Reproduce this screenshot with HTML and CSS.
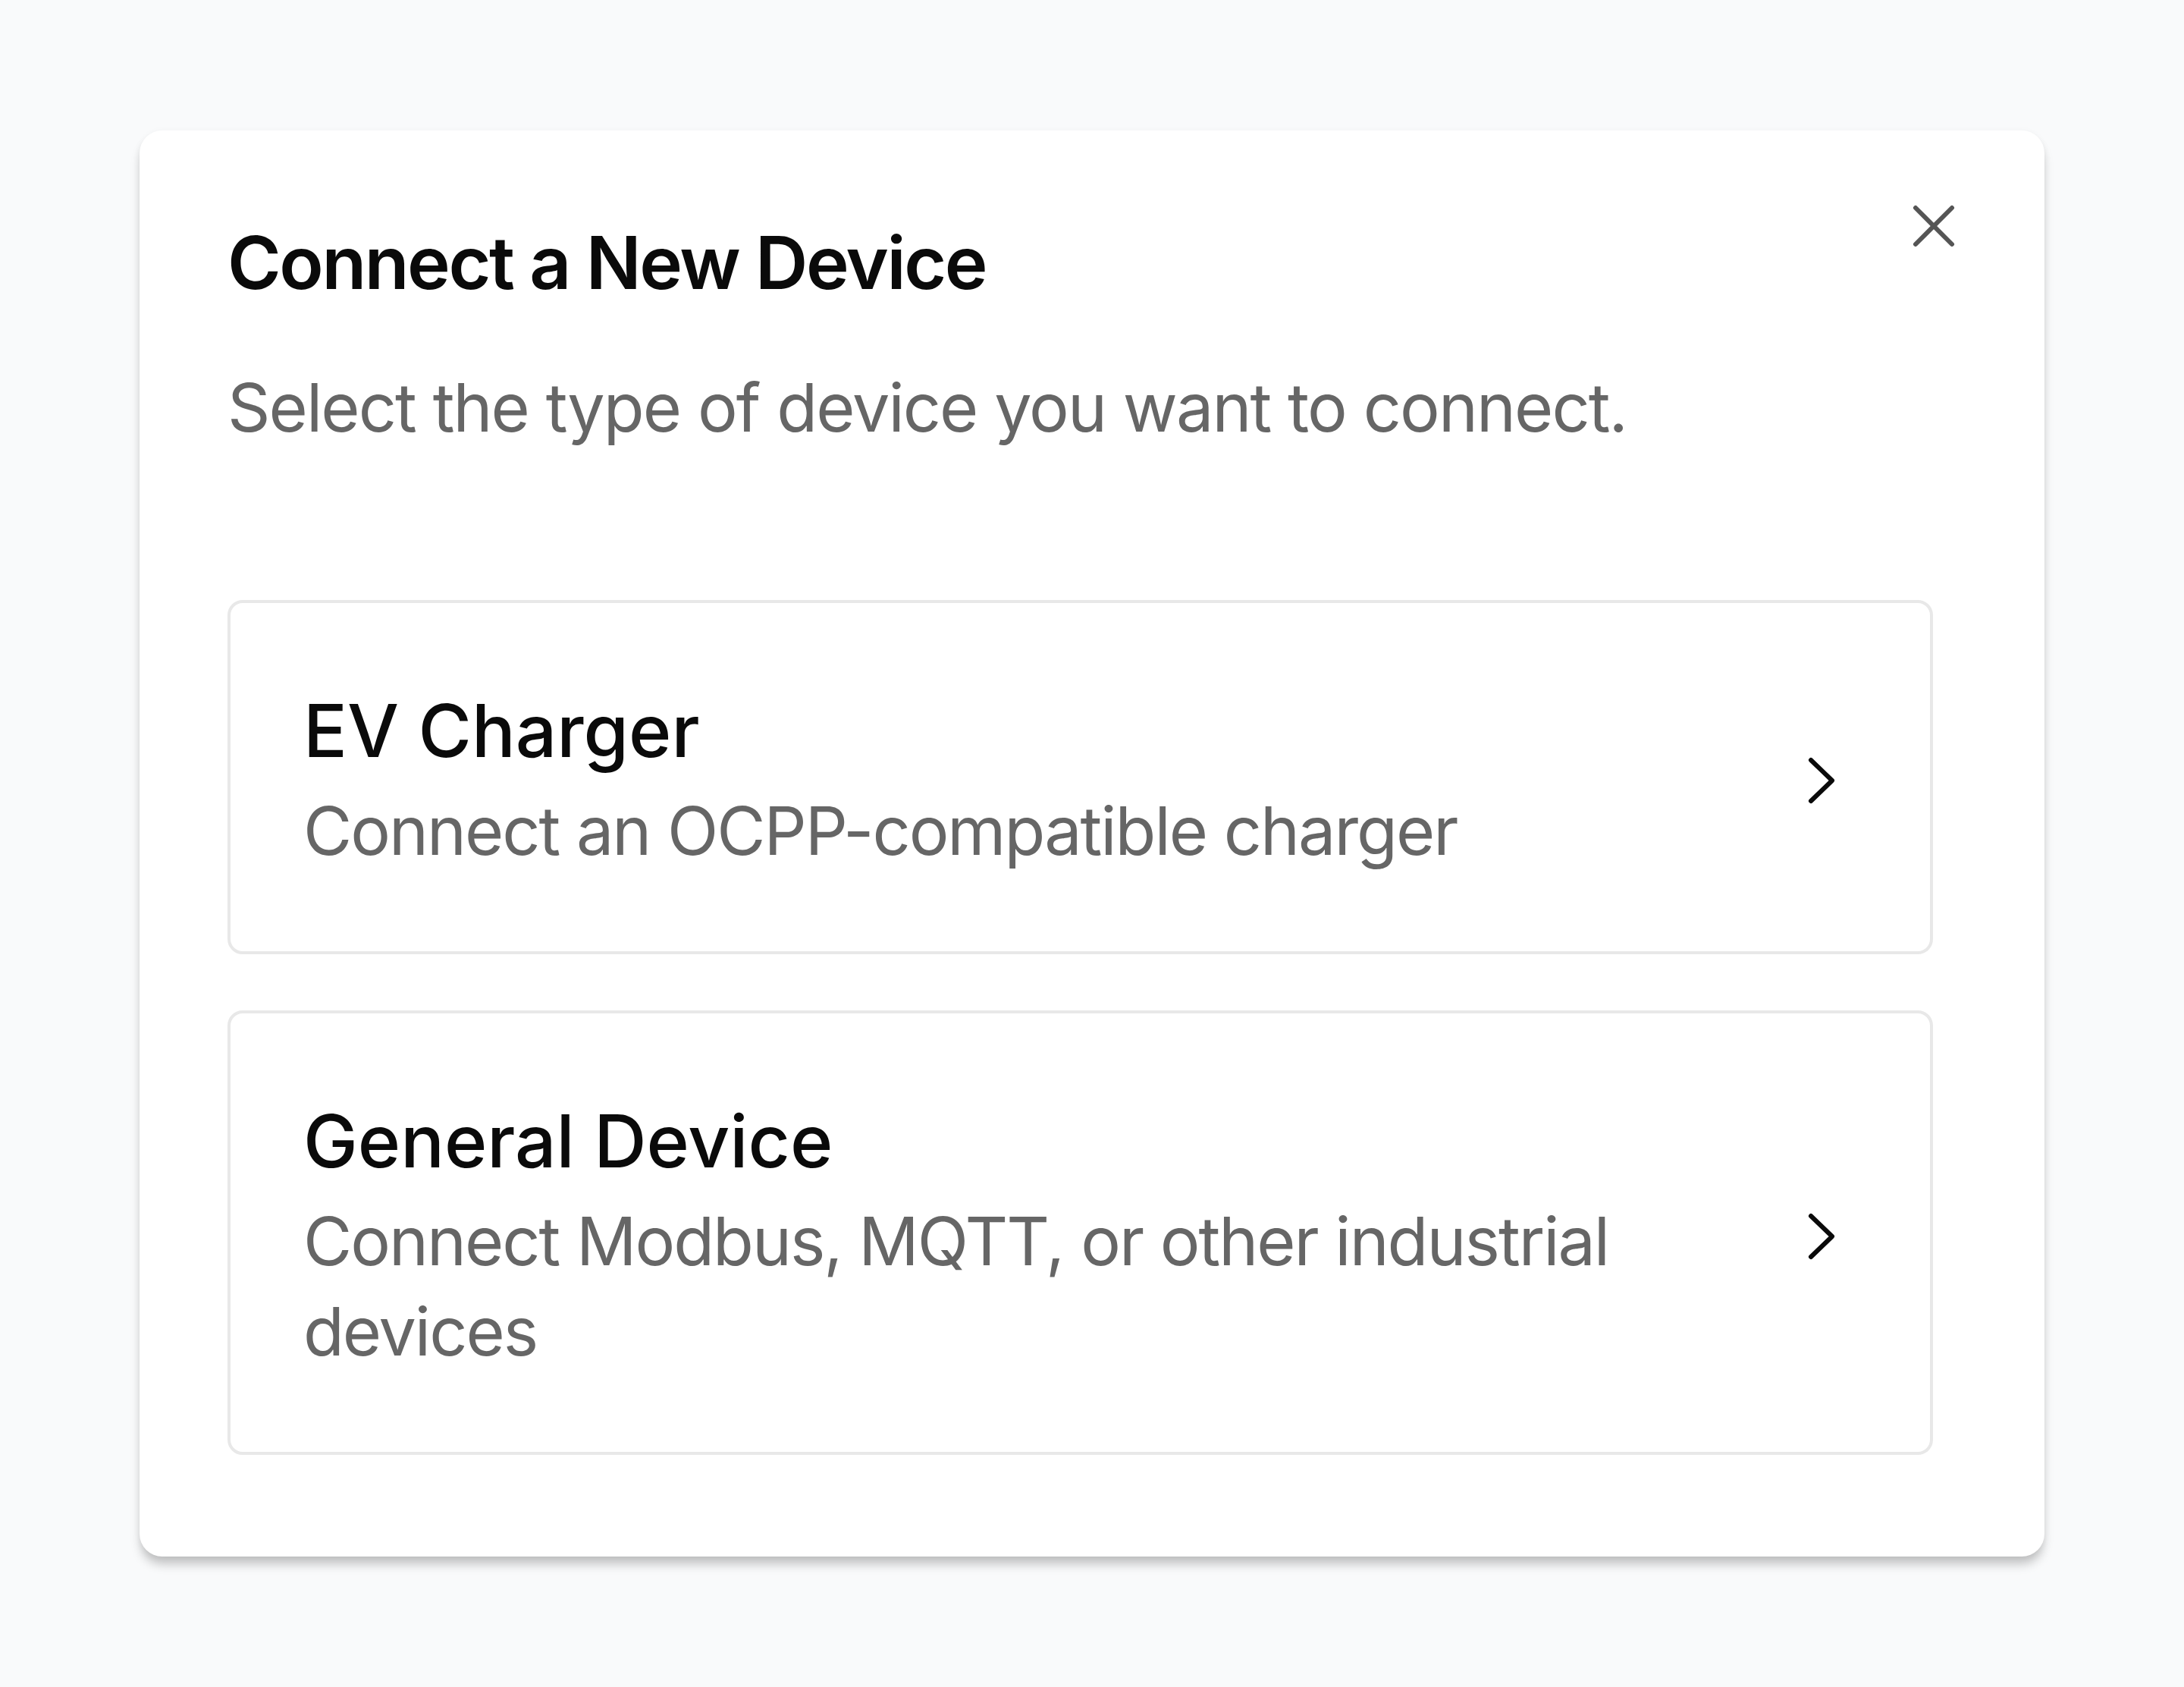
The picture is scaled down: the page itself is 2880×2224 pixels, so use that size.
FILE: index.html
```html
<!DOCTYPE html>
<html lang="en">
<head>
<meta charset="utf-8">
<title>Connect a New Device</title>
<link rel="stylesheet" href="styles.css">
</head>
<body>
<div class="page">
  <div class="modal" role="dialog" aria-labelledby="modal-title">
    <button class="close" aria-label="Close">
      <svg width="96" height="96" viewBox="0 0 96 96" fill="none" stroke="#555555" stroke-width="6" stroke-linecap="round">
        <line x1="24" y1="24" x2="72" y2="72"/>
        <line x1="72" y1="24" x2="24" y2="72"/>
      </svg>
    </button>
    <h2 class="title" id="modal-title">Connect a New Device</h2>
    <p class="subtitle">Select the type of device you want to connect.</p>
    <div class="options">
      <button class="option">
        <span class="option-text">
          <span class="option-title">EV Charger</span>
          <span class="option-desc">Connect an OCPP-compatible charger</span>
        </span>
        <svg class="chevron" width="44" height="72" viewBox="0 0 44 72" fill="none" stroke="#0a0a0a" stroke-width="6" stroke-linecap="round" stroke-linejoin="round">
          <path d="M8 9 L36 36 L8 63"/>
        </svg>
      </button>
      <button class="option">
        <span class="option-text">
          <span class="option-title">General Device</span>
          <span class="option-desc">Connect Modbus, MQTT, or other industrial devices</span>
        </span>
        <svg class="chevron" width="44" height="72" viewBox="0 0 44 72" fill="none" stroke="#0a0a0a" stroke-width="6" stroke-linecap="round" stroke-linejoin="round">
          <path d="M8 9 L36 36 L8 63"/>
        </svg>
      </button>
    </div>
  </div>
</div>
</body>
</html>
```

FILE: styles.css
```css
* {
  box-sizing: border-box;
}

html, body {
  margin: 0;
  padding: 0;
  background: #f9fafb;
  font-family: "Inter", "Noto Sans", sans-serif;
}

.page {
  padding: 172px 0 0 184px;
  min-height: 2224px;
}

.modal {
  position: relative;
  width: 2512px;
  background: #ffffff;
  border-radius: 30px;
  padding: 114px 147px 134px 116px;
  box-shadow: 0 12px 14px -2px rgba(0, 0, 0, 0.22), 0 2px 10px rgba(0, 0, 0, 0.05);
}

.close {
  position: absolute;
  top: 78px;
  right: 98px;
  width: 96px;
  height: 96px;
  padding: 0;
  border: 0;
  background: transparent;
  display: flex;
  align-items: center;
  justify-content: center;
  cursor: pointer;
}

.title {
  margin: 0;
  font-size: 96px;
  line-height: 120px;
  font-weight: 600;
  letter-spacing: -0.025em;
  color: #0a0a0a;
}

.subtitle {
  margin: 72px 0 0;
  font-size: 88px;
  line-height: 118px;
  font-weight: 400;
  letter-spacing: -0.022em;
  color: #666666;
}

.options {
  margin-top: 195px;
  display: flex;
  flex-direction: column;
  gap: 74px;
}

.option {
  display: flex;
  align-items: center;
  gap: 60px;
  width: 100%;
  padding: 108px 121px 99px 96px;
  border: 4px solid #e8e8e8;
  border-radius: 20px;
  background: #ffffff;
  text-align: left;
  font-family: inherit;
  cursor: pointer;
}

.option-text {
  flex: 1;
  display: flex;
  flex-direction: column;
}

.option-title {
  font-size: 96px;
  line-height: 120px;
  font-weight: 500;
  color: #0a0a0a;
}

.option-desc {
  margin-top: 13px;
  font-size: 88px;
  line-height: 119px;
  font-weight: 400;
  letter-spacing: -0.023em;
  color: #666666;
}

.chevron {
  flex: none;
  display: block;
}
```
